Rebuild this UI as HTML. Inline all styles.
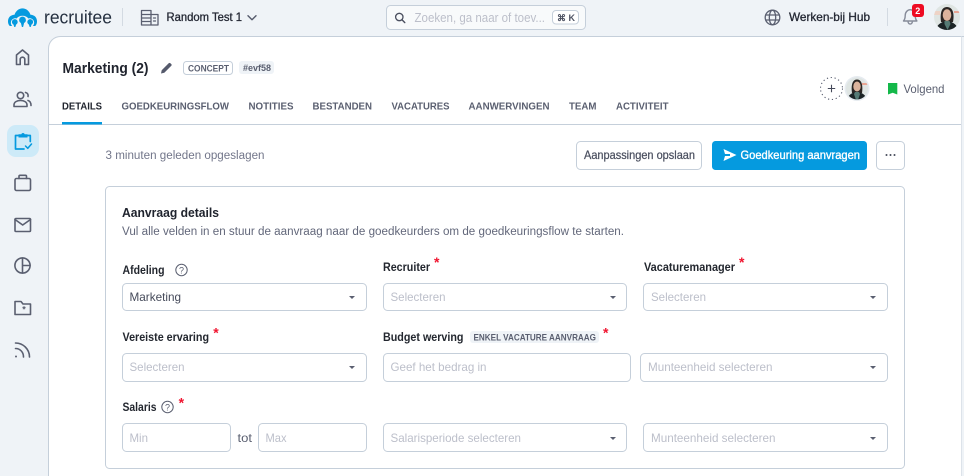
<!DOCTYPE html>
<html><head><meta charset="utf-8"><title>Recruitee</title>
<style>
html,body{margin:0;padding:0;width:964px;height:476px;overflow:hidden;background:#eff3f7}
svg{display:block}
text{font-family:"Liberation Sans",sans-serif;white-space:pre}
.b{font-weight:700}
.m{stroke-width:.3px}
.l{font-size:12px;font-weight:700;fill:#23272f}
.tab{font-size:10.5px;font-weight:700;fill:#5a5f70}
.ph{font-size:12px;fill:#bcbfca}
.f{fill:#fff;stroke:#c5cfda;stroke-width:1}
.star{font-size:14px;font-weight:700;fill:#f0142f}
.ic{fill:none;stroke:#5a5f70;stroke-width:1.6;stroke-linecap:round;stroke-linejoin:round}
.arr{fill:#5a5f70}
</style></head><body>
<svg width="964" height="476" viewBox="0 0 964 476" xmlns="http://www.w3.org/2000/svg">
<defs>
<clipPath id="c1"><circle cx="947" cy="17" r="13"/></clipPath>
<clipPath id="c2"><circle cx="857" cy="88.5" r="11"/></clipPath>
</defs>
<rect width="964" height="476" fill="#eff3f7"/>
<!-- panel -->
<path d="M48.5 476V48.5a12 12 0 0 1 12-12H961V476Z" fill="#fff"/>
<path d="M48.5 476V48.5a12 12 0 0 1 12-12H964" fill="none" stroke="#c5cfda"/>
<path d="M961.5 36.5V476" stroke="#dde3ea" fill="none"/>
<!-- logo -->
<g fill="#059adf">
<path d="M8 21.5C8 17.5 10.5 15 14.5 14.8 15.8 11 18.8 8.4 22.5 8.4S29.2 11 30.5 14.8C34.5 15 37 17.500 37 21.5C37 23.5 36.3 25 35.2 26H32.8C34 24.800 34.4 23.300 34 21.500 33.300 19 30.500 17.700 28.300 18.500 27.100 16.800 25 15.800 22.500 15.800S17.900 16.800 16.700 18.500C14.500 17.700 11.700 19 11 21.500 10.600 23.300 11 24.800 12.200 26H9.800C8.700 25 8 23.500 8 21.500Z"/>
<circle cx="22.500" cy="20" r="3.400"/><path d="M20.800 22.500h3.400l-1.100 4.500h-1.200z"/>
<circle cx="14.800" cy="22" r="2.900"/><path d="M13.300 24h3l-1 3h-1z"/>
<circle cx="30.200" cy="22" r="2.900"/><path d="M28.700 24h3l-1 3h-1z"/>
</g>
<text x="44" y="23.300" font-size="18" fill="#253040" textLength="68" lengthAdjust="spacingAndGlyphs">recruitee</text>
<path d="M122.500 8V26" stroke="#d3dae2"/>
<!-- building -->
<g class="ic" stroke-width="1.300" style="stroke-width:1.300">
<path d="M141.500 25V10.500H151V25ZM151 14.500H158V25H141.500M141.500 14.500H151M141.500 18H151M141.500 21.500H151M153.500 18H155.500M153.500 21H155.500"/>
</g>
<text x="166.500" y="21" class="m" font-size="12" fill="#232733" stroke="#232733" textLength="75.500" lengthAdjust="spacingAndGlyphs">Random Test 1</text>
<path d="M248 15.800l4 4 4-4" fill="none" stroke="#555a6c" stroke-width="1.400" stroke-linecap="round" stroke-linejoin="round"/>
<!-- search -->
<rect x="386.500" y="5.500" width="199" height="24" rx="4" fill="#f8fafb" stroke="#c5cfda"/>
<circle cx="399.300" cy="17" r="3.700" fill="none" stroke="#4a4f5f" stroke-width="1.300"/>
<path d="M402 19.800l2.800 2.800" stroke="#4a4f5f" stroke-width="1.400" stroke-linecap="round"/>
<text x="414.500" y="22" font-size="12.500" fill="#bcbfca" textLength="130.500" lengthAdjust="spacingAndGlyphs">Zoeken, ga naar of toev...</text>
<rect x="552.500" y="10.500" width="26" height="13.500" rx="3.500" fill="#fff" stroke="#c5cfda"/>
<text x="557" y="21" class="b" font-size="9" fill="#4f5464" font-family="DejaVu Sans">⌘</text>
<text x="568.500" y="21" class="b" font-size="9" fill="#4f5464">K</text>
<!-- globe -->
<g class="ic" style="stroke-width:1.300">
<circle cx="772.500" cy="17.500" r="7.300"/>
<ellipse cx="772.500" cy="17.500" rx="3.200" ry="7.300"/>
<path d="M765.800 15H779.200M765.800 20H779.200"/>
</g>
<text x="789" y="21" class="m" font-size="12" fill="#232733" stroke="#232733" textLength="81" lengthAdjust="spacingAndGlyphs">Werken-bij Hub</text>
<path d="M887.500 8V26" stroke="#d3dae2"/>
<!-- bell -->
<path d="M903.500 21c1.300-1.500 1.700-3.300 1.700-5.500 0-3.300 2.300-5.800 5-5.800s5 2.500 5 5.800c0 2.200.4 4 1.700 5.500ZM908 21.800c.3 1.500 1.200 2.300 2.200 2.300s1.900-.8 2.200-2.300" fill="none" stroke="#868b99" stroke-width="1.400" stroke-linejoin="round"/>
<rect x="912" y="4" width="12" height="13" rx="3" fill="#ee0b22"/>
<text x="915.200" y="14" class="b" font-size="9" fill="#fff">2</text>
<!-- avatar top -->
<g clip-path="url(#c1)">
<rect x="934" y="4" width="26" height="26" fill="#dfe5e3"/>
<rect x="934" y="11" width="6" height="4" fill="#eed3c6"/><rect x="954" y="11" width="6" height="2" fill="#e9a593"/>
<path d="M941 22C940 14 941 7 947 7s7.500 7 6 15Z" fill="#2b2624"/>
<ellipse cx="947" cy="15" rx="4.300" ry="5.800" fill="#dcb39c"/>
<path d="M936 31c0-6 5-8.500 8-9.500l3 4 3-4c3 1 8 3.500 8 9.500Z" fill="#1c2426"/>
<path d="M944.500 21h5l1 3-3 6-3-6Z" fill="#557a74"/>
</g>
<!-- heading -->
<text x="62.500" y="73" class="b" font-size="15" fill="#20242e" textLength="86" lengthAdjust="spacingAndGlyphs">Marketing (2)</text>
<path d="M161 73.500l.7-3.300 7-7c.5-.5 1.200-.5 1.700 0l.9.900c.5.500.5 1.200 0 1.700l-7 7Z" fill="#555a6c"/>
<rect x="183.500" y="61.500" width="49" height="13" rx="3" fill="#fff" stroke="#c5cfda"/>
<text x="188" y="71.300" class="b" font-size="9" fill="#5a5f70" textLength="41" lengthAdjust="spacingAndGlyphs">CONCEPT</text>
<rect x="239" y="61" width="35" height="13" rx="3" fill="#eff3f7"/>
<text x="243" y="71" class="b" font-size="9" fill="#5a5f70" textLength="28" lengthAdjust="spacingAndGlyphs">#evf58</text>
<!-- tabs -->
<text x="62" y="109.300" class="tab" style="fill:#20242e" textLength="40" lengthAdjust="spacingAndGlyphs">DETAILS</text>
<text x="121.500" y="109.300" class="tab" textLength="107.500" lengthAdjust="spacingAndGlyphs">GOEDKEURINGSFLOW</text>
<text x="248.500" y="109.300" class="tab" textLength="45" lengthAdjust="spacingAndGlyphs">NOTITIES</text>
<text x="312.500" y="109.300" class="tab" textLength="59.500" lengthAdjust="spacingAndGlyphs">BESTANDEN</text>
<text x="391.500" y="109.300" class="tab" textLength="58" lengthAdjust="spacingAndGlyphs">VACATURES</text>
<text x="468.500" y="109.300" class="tab" textLength="81" lengthAdjust="spacingAndGlyphs">AANWERVINGEN</text>
<text x="569" y="109.300" class="tab" textLength="27.500" lengthAdjust="spacingAndGlyphs">TEAM</text>
<text x="616" y="109.300" class="tab" textLength="52.500" lengthAdjust="spacingAndGlyphs">ACTIVITEIT</text>
<path d="M49 124.500H961" stroke="#c5cfda"/>
<rect x="62" y="122" width="40" height="2.500" fill="#059adf"/>
<!-- followers -->
<circle cx="831.500" cy="88.500" r="11" fill="#fff" stroke="#5a5f70" stroke-width="1.100" stroke-dasharray="1.200 2.700"/>
<path d="M827.800 88.500H835.200M831.500 84.800V92.200" stroke="#454a5a" stroke-width="1.100"/>
<circle cx="857" cy="88.500" r="12.500" fill="#e6ebf0"/>
<g clip-path="url(#c2)">
<rect x="846" y="77" width="22" height="23" fill="#dfe5e3"/>
<rect x="862" y="83" width="6" height="2" fill="#e9a593"/>
<path d="M852 93C851 86 852 79.500 857 79.500s6 6.500 5 13.500Z" fill="#2b2624"/>
<ellipse cx="857" cy="86.500" rx="3.700" ry="5" fill="#dcb39c"/>
<path d="M847 101c0-5 4-7.500 7-8.500l3 3.500 3-3.500c3 1 7 3.500 7 8.500Z" fill="#1c2426"/>
<path d="M855 92h4l1 2-2 6h-2l-2-6Z" fill="#557a74"/>
</g>
<path d="M888 83h9.300v11.500l-4.600-1.700-4.700 1.700Z" fill="#14b84a"/>
<text x="903.500" y="93" font-size="12" fill="#5a5f70" textLength="41" lengthAdjust="spacingAndGlyphs">Volgend</text>
<!-- action row -->
<text x="105.500" y="159" font-size="11.500" fill="#72768a" textLength="159" lengthAdjust="spacingAndGlyphs">3 minuten geleden opgeslagen</text>
<rect x="576.500" y="141.500" width="125" height="28" rx="4" fill="#fff" stroke="#c5cfda"/>
<text x="584" y="159" font-size="12" fill="#4b5060" stroke="#4b5060" stroke-width=".25" textLength="111" lengthAdjust="spacingAndGlyphs">Aanpassingen opslaan</text>
<rect x="712" y="141" width="155" height="29" rx="3.500" fill="#059adf"/>
<path d="M723.500 149l13 6-13 6 1.500-5h5v-2h-5Z" fill="#fff"/>
<text x="740.500" y="159" font-size="12" fill="#fff" stroke="#fff" stroke-width=".35" textLength="119.500" lengthAdjust="spacingAndGlyphs">Goedkeuring aanvragen</text>
<rect x="876.500" y="141.500" width="28" height="28" rx="4" fill="#fff" stroke="#c5cfda"/>
<g fill="#454a5a"><circle cx="886.500" cy="155" r="1"/><circle cx="890.500" cy="155" r="1"/><circle cx="894.500" cy="155" r="1"/></g>
<!-- card -->
<rect x="105.500" y="186.500" width="799" height="282" rx="4" fill="#fff" stroke="#c5cfda"/>
<text x="122" y="217" class="b" font-size="13" fill="#20242e" textLength="97" lengthAdjust="spacingAndGlyphs">Aanvraag details</text>
<text x="122" y="235" font-size="11.500" fill="#62677a" textLength="502" lengthAdjust="spacingAndGlyphs">Vul alle velden in en stuur de aanvraag naar de goedkeurders om de goedkeuringsflow te starten.</text>
<!-- row 1 -->
<text x="122.500" y="274" class="l" textLength="42" lengthAdjust="spacingAndGlyphs">Afdeling</text>
<circle cx="181.500" cy="270" r="5.700" fill="none" stroke="#5a5f70"/>
<text x="179" y="273.300" font-size="9" fill="#5a5f70">?</text>
<text x="383" y="271" class="l" textLength="47" lengthAdjust="spacingAndGlyphs">Recruiter</text>
<text x="434" y="267" class="star">*</text>
<text x="644" y="271" class="l" textLength="91" lengthAdjust="spacingAndGlyphs">Vacaturemanager</text>
<text x="739" y="267" class="star">*</text>
<rect class="f" x="122.500" y="283.500" width="244" height="27" rx="4"/>
<text x="129.500" y="301" font-size="12" fill="#454a5a" textLength="51.500" lengthAdjust="spacingAndGlyphs">Marketing</text>
<path class="arr" d="M349 296h6l-3 3Z"/>
<rect class="f" x="383.500" y="283.500" width="243" height="27" rx="4"/>
<text x="390.500" y="301" class="ph" textLength="55" lengthAdjust="spacingAndGlyphs">Selecteren</text>
<path class="arr" d="M610 296h6l-3 3Z"/>
<rect class="f" x="643.500" y="283.500" width="244" height="27" rx="4"/>
<text x="651" y="301" class="ph" textLength="55" lengthAdjust="spacingAndGlyphs">Selecteren</text>
<path class="arr" d="M870 296h6l-3 3Z"/>
<!-- row 2 -->
<text x="122.500" y="341" class="l" textLength="86.500" lengthAdjust="spacingAndGlyphs">Vereiste ervaring</text>
<text x="213.300" y="337.300" class="star">*</text>
<text x="383" y="341" class="l" textLength="80.500" lengthAdjust="spacingAndGlyphs">Budget werving</text>
<rect x="470" y="331" width="129" height="12" rx="3" fill="#eff3f7"/>
<text x="473.500" y="340.500" class="b" font-size="9" fill="#5a5f70" textLength="122.500" lengthAdjust="spacingAndGlyphs">ENKEL VACATURE AANVRAAG</text>
<text x="603" y="337.300" class="star">*</text>
<rect class="f" x="122.500" y="353.500" width="244" height="28" rx="4"/>
<text x="129.500" y="371" class="ph" textLength="55" lengthAdjust="spacingAndGlyphs">Selecteren</text>
<path class="arr" d="M349 366h6l-3 3Z"/>
<rect class="f" x="383.500" y="353.500" width="247" height="28" rx="4"/>
<text x="390.500" y="371" class="ph" textLength="96" lengthAdjust="spacingAndGlyphs">Geef het bedrag in</text>
<rect class="f" x="640.500" y="353.500" width="247" height="28" rx="4"/>
<text x="648" y="371" class="ph" textLength="124.500" lengthAdjust="spacingAndGlyphs">Munteenheid selecteren</text>
<path class="arr" d="M870 366h6l-3 3Z"/>
<!-- row 3 -->
<text x="122.500" y="411" class="l" textLength="34" lengthAdjust="spacingAndGlyphs">Salaris</text>
<circle cx="167.500" cy="407" r="5.700" fill="none" stroke="#5a5f70"/>
<text x="165" y="410.300" font-size="9" fill="#5a5f70">?</text>
<text x="178.600" y="407.300" class="star">*</text>
<rect class="f" x="122.500" y="423.500" width="108" height="28" rx="4"/>
<text x="129.500" y="442" class="ph" textLength="18.500" lengthAdjust="spacingAndGlyphs">Min</text>
<text x="237.500" y="442" font-size="12" fill="#5a5f70" textLength="14.500" lengthAdjust="spacingAndGlyphs">tot</text>
<rect class="f" x="258.500" y="423.500" width="108" height="28" rx="4"/>
<text x="265.500" y="442" class="ph" textLength="21" lengthAdjust="spacingAndGlyphs">Max</text>
<rect class="f" x="383.500" y="423.500" width="243" height="28" rx="4"/>
<text x="390.500" y="442" class="ph" textLength="130.500" lengthAdjust="spacingAndGlyphs">Salarisperiode selecteren</text>
<path class="arr" d="M610 437h6l-3 3Z"/>
<rect class="f" x="643.500" y="423.500" width="244" height="28" rx="4"/>
<text x="651" y="442" class="ph" textLength="124.500" lengthAdjust="spacingAndGlyphs">Munteenheid selecteren</text>
<path class="arr" d="M870 437h6l-3 3Z"/>
<!-- sidebar -->
<g class="ic">
<path d="M16.500 64.500V55L22.500 50l6 5v9.500h-3.700V59.500a2.300 2.300 0 0 0-4.600 0V64.500Z"/>
<circle cx="20.500" cy="95.500" r="3.200"/>
<path d="M14 106.500v-1.500c0-3 3-4.500 6.500-4.500s6.500 1.500 6.500 4.500v1.500Z"/>
<path d="M25.500 92.500c2 .5 3 2 2.500 4M28 100.500c2 .5 3 2.500 3 5"/>
<rect x="15" y="178.500" width="15.500" height="12" rx="1.500"/>
<path d="M19 178.500v-2.200a1 1 0 0 1 1-1h5.500a1 1 0 0 1 1 1v2.200"/>
<rect x="15" y="218.500" width="15.500" height="13" rx="1"/>
<path d="M15 219.500l7.700 5.500 7.800-5.500"/>
<circle cx="22.500" cy="265.500" r="7.600"/>
<path d="M22.500 258v15M22.500 265.500h7.500"/>
<path d="M15 314.500V301.500h6l2 2.500h7.500v10.500Z"/>
<path d="M15.500 348.500c4.500 0 8 3.500 8 8.500M15.500 343c7.500 0 14 6 14 14"/>
</g>
<text x="22.300" y="312.500" class="b" font-size="9" fill="#5a5f70">*</text>
<circle cx="16" cy="356.500" r="1" fill="#5a5f70"/>
<rect x="7" y="125" width="32" height="32" rx="9" fill="#cdeaf8"/>
<path d="M18.500 135.500h-3v13.500H24M27.500 135.500h2.800v6" fill="none" stroke="#059adf" stroke-width="1.700" stroke-linecap="round" stroke-linejoin="round"/>
<path d="M18.500 137.500v-3.300h2.800a1.800 1.800 0 0 1 3.400 0h2.800v3.300Z" fill="#059adf"/>
<path d="M25.500 146l2.300 2.300 3.700-4.300" fill="none" stroke="#059adf" stroke-width="1.500" stroke-linecap="round" stroke-linejoin="round"/>
</svg>
</body></html>
